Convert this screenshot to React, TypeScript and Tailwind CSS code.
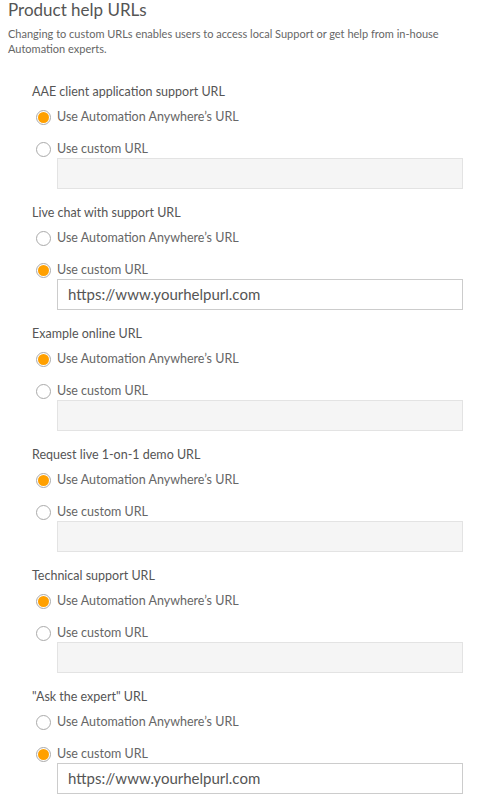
import React from "react";

type Section = {
    title: string;
    custom: boolean;
};

const sections: Section[] = [
    { title: "AAE client application support URL", custom: false },
    { title: "Live chat with support URL", custom: true },
    { title: "Example online URL", custom: false },
    { title: "Request live 1-on-1 demo URL", custom: false },
    { title: "Technical support URL", custom: false },
    { title: "\"Ask the expert\" URL", custom: true },
];

const Radio: React.FC<{ checked: boolean; label: string; className: string }> = ({ checked, label, className }) => {
    return (
        <div className={`flex items-center ${className}`}>
            <span className="ml-[28px] w-[15px] h-[15px] rounded-full border border-[#aaaaaa] bg-white flex items-center justify-center shrink-0">
                {checked && <span className="w-[11px] h-[11px] rounded-full bg-[#ffa000]"></span>}
            </span>
            <span className="ml-[6px] text-[12.5px] text-[#666666]">{label}</span>
        </div>
    );
};

const App: React.FC = () => {
    return (
        <div className="w-[485px] h-[803px] overflow-hidden bg-white px-2 font-['Lato',sans-serif]">
            <h1 className="-mt-px text-[17px] leading-[22px] text-[#555555]">Product help URLs</h1>
            <p className="mt-[5px] text-[11px] leading-[15px] text-[#666666] pr-2">
                Changing to custom URLs enables users to access local Support or get help from in-house
                Automation experts.
            </p>
            <div className="mt-[26px]">
                {sections.map((s) => (
                    <div key={s.title} className="mb-[14px]">
                        <div className="ml-6 h-5 leading-5 text-[12.5px] text-[#555555]">{s.title}</div>
                        <Radio checked={!s.custom} label="Use Automation Anywhere’s URL" className="h-[30px]" />
                        <Radio checked={s.custom} label="Use custom URL" className="mt-2 h-[18px]" />
                        <div className="ml-[49px] mr-[14px]">
                            {s.custom ? (
                                <div className="h-[31px] border border-[#cccccc] bg-white px-[10px] flex items-center text-[15px] text-[#555555]">
                                    https://www.yourhelpurl.com
                                </div>
                            ) : (
                                <div className="h-[31px] border border-[#e3e3e3] bg-[#f5f5f5]"></div>
                            )}
                        </div>
                    </div>
                ))}
            </div>
        </div>
    );
};

export default App;
